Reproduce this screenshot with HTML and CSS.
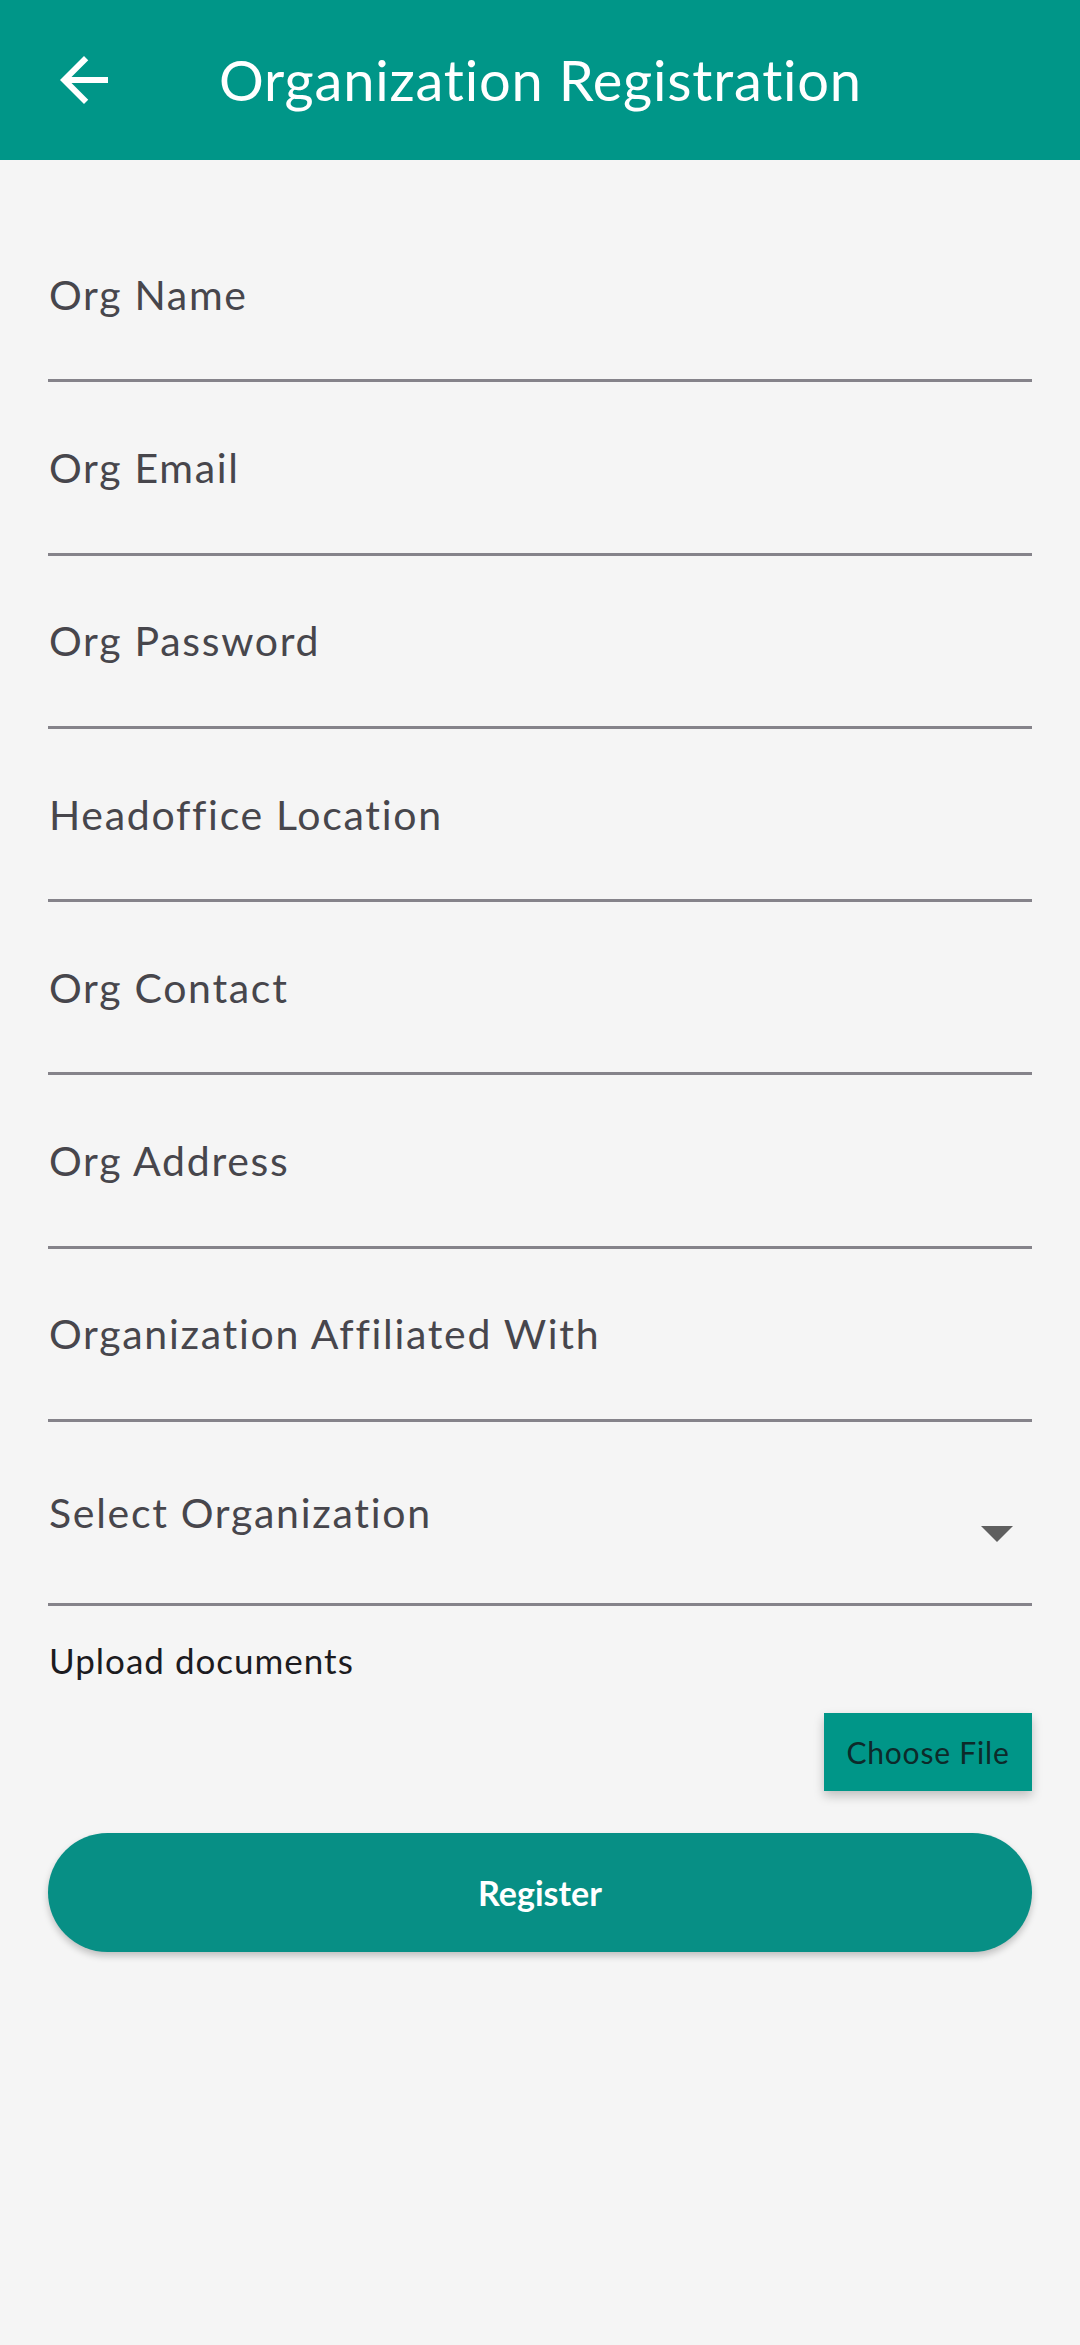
FILE: index.html
```html
<!DOCTYPE html>
<html lang="en">
<head>
<meta charset="utf-8">
<title>Organization Registration</title>
<link rel="stylesheet" href="styles.css">
</head>
<body>
<header class="appbar">
  <button class="back" aria-label="Back">
    <svg viewBox="0 0 24 24" width="72" height="72"><path fill="#fff" d="M20 11H7.83l5.59-5.59L12 4l-8 8 8 8 1.41-1.41L7.83 13H20v-2z"/></svg>
  </button>
  <h1 class="title">Organization Registration</h1>
</header>
<main class="form">
  <div class="field"><span class="label">Org Name</span></div>
  <div class="field"><span class="label">Org Email</span></div>
  <div class="field"><span class="label">Org Password</span></div>
  <div class="field"><span class="label">Headoffice Location</span></div>
  <div class="field"><span class="label">Org Contact</span></div>
  <div class="field"><span class="label">Org Address</span></div>
  <div class="field"><span class="label">Organization Affiliated With</span></div>
  <div class="field dropdown">
    <span class="label">Select Organization</span>
    <svg class="caret" viewBox="0 0 32 16" width="32" height="16"><path fill="#5f5f5f" d="M0 0h32L16 16z"/></svg>
  </div>
  <p class="upload-label">Upload documents</p>
  <div class="file-row"><button class="choose">Choose File</button></div>
  <button class="register">Register</button>
</main>
</body>
</html>
```
FILE: styles.css
```css
* { box-sizing: border-box; }
html, body { margin: 0; padding: 0; }
body {
  width: 1080px;
  min-height: 2345px;
  background: #f5f5f5;
  font-family: Lato, "Open Sans", sans-serif;
}
.appbar {
  height: 160px;
  background: #009688;
  display: flex;
  align-items: center;
}
.back {
  margin-left: 48px;
  width: 72px;
  height: 72px;
  padding: 0;
  border: 0;
  background: none;
  display: flex;
}
.title {
  margin: 0 0 0 99px;
  color: #fff;
  font-size: 56px;
  font-weight: 400;
  letter-spacing: 0.8px;
  line-height: 1;
}
.form {
  padding: 49px 48px 0;
  display: flex;
  flex-direction: column;
}
.field {
  height: 173.3px;
  border-bottom: 3px solid #85838a;
  display: flex;
  align-items: center;
  padding-left: 1px;
}
.label {
  color: #47464c;
  font-size: 41px;
  letter-spacing: 1.7px;
  line-height: 1;
}
.dropdown {
  height: 184px;
  justify-content: space-between;
}
.caret {
  margin-top: 42px;
  margin-right: 19px;
}
.upload-label {
  margin: 37px 0 0 1px;
  font-size: 35px;
  line-height: 1;
  color: #1c1b1f;
  letter-spacing: 1px;
}
.file-row {
  display: flex;
  justify-content: flex-end;
  margin-top: 35px;
}
.choose {
  width: 208px;
  height: 78px;
  border: 0;
  border-radius: 0;
  background: #009688;
  color: #0d2a2a;
  font-family: inherit;
  font-size: 30px;
  letter-spacing: 0.8px;
  box-shadow: 0 5px 10px rgba(0,0,0,0.22);
}
.register {
  margin-top: 42px;
  height: 119px;
  border: 0;
  border-radius: 60px;
  background: #078f85;
  color: #fff;
  font-family: inherit;
  font-size: 34px;
  font-weight: 700;
  box-shadow: 0 4px 7px rgba(0,0,0,0.22);
}
```
